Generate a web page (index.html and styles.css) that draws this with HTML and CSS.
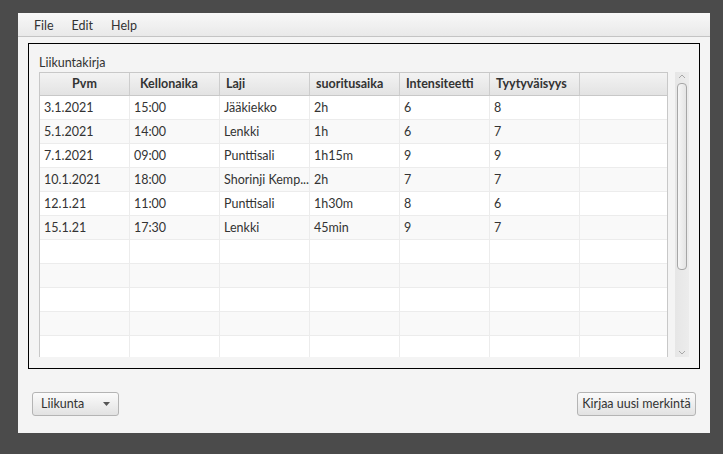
FILE: index.html
```html
<!DOCTYPE html>
<html>
<head>
<meta charset="utf-8">
<link rel="stylesheet" href="styles.css">
</head>
<body>
<div class="window">
  <div class="menubar">
    <span class="menu">File</span>
    <span class="menu">Edit</span>
    <span class="menu">Help</span>
  </div>
  <div class="main">
    <div class="panel">
      <div class="title">Liikuntakirja</div>
      <div class="tablewrap">
        <div class="table">
          <div class="row head">
            <div class="cell center">Pvm</div>
            <div class="cell kello">Kellonaika</div>
            <div class="cell">Laji</div>
            <div class="cell">suoritusaika</div>
            <div class="cell">Intensiteetti</div>
            <div class="cell">Tyytyväisyys</div>
            <div class="cell last"></div>
          </div>
          <div class="body">
            <div class="row"><div class="cell">3.1.2021</div><div class="cell">15:00</div><div class="cell">Jääkiekko</div><div class="cell">2h</div><div class="cell">6</div><div class="cell">8</div><div class="cell last"></div></div>
            <div class="row"><div class="cell">5.1.2021</div><div class="cell">14:00</div><div class="cell">Lenkki</div><div class="cell">1h</div><div class="cell">6</div><div class="cell">7</div><div class="cell last"></div></div>
            <div class="row"><div class="cell">7.1.2021</div><div class="cell">09:00</div><div class="cell">Punttisali</div><div class="cell">1h15m</div><div class="cell">9</div><div class="cell">9</div><div class="cell last"></div></div>
            <div class="row"><div class="cell">10.1.2021</div><div class="cell">18:00</div><div class="cell">Shorinji Kemp...</div><div class="cell">2h</div><div class="cell">7</div><div class="cell">7</div><div class="cell last"></div></div>
            <div class="row"><div class="cell">12.1.21</div><div class="cell">11:00</div><div class="cell">Punttisali</div><div class="cell">1h30m</div><div class="cell">8</div><div class="cell">6</div><div class="cell last"></div></div>
            <div class="row"><div class="cell">15.1.21</div><div class="cell">17:30</div><div class="cell">Lenkki</div><div class="cell">45min</div><div class="cell">9</div><div class="cell">7</div><div class="cell last"></div></div>
            <div class="row"><div class="cell"></div><div class="cell"></div><div class="cell"></div><div class="cell"></div><div class="cell"></div><div class="cell"></div><div class="cell last"></div></div>
            <div class="row"><div class="cell"></div><div class="cell"></div><div class="cell"></div><div class="cell"></div><div class="cell"></div><div class="cell"></div><div class="cell last"></div></div>
            <div class="row"><div class="cell"></div><div class="cell"></div><div class="cell"></div><div class="cell"></div><div class="cell"></div><div class="cell"></div><div class="cell last"></div></div>
            <div class="row"><div class="cell"></div><div class="cell"></div><div class="cell"></div><div class="cell"></div><div class="cell"></div><div class="cell"></div><div class="cell last"></div></div>
            <div class="row"><div class="cell"></div><div class="cell"></div><div class="cell"></div><div class="cell"></div><div class="cell"></div><div class="cell"></div><div class="cell last"></div></div>
          </div>
        </div>
        <div class="scrollbar">
          <svg class="arrow" width="14" height="10" viewBox="0 0 14 10"><path d="M4 6 L7 3 L10 6" fill="none" stroke="#a8a8a8" stroke-width="1"/></svg>
          <div class="thumb"></div>
          <div class="spacer"></div>
          <svg class="arrow" width="14" height="10" viewBox="0 0 14 10"><path d="M4 4 L7 7 L10 4" fill="none" stroke="#a8a8a8" stroke-width="1"/></svg>
        </div>
      </div>
    </div>
    <div class="bottom">
      <div class="combo"><span>Liikunta</span><svg width="7" height="4" viewBox="0 0 7 4"><path d="M0 0 H7 L3.5 4 Z" fill="#555"/></svg></div>
      <div class="button">Kirjaa uusi merkintä</div>
    </div>
  </div>
</div>
</body>
</html>
```
FILE: styles.css
```css
html, body {
  margin: 0;
  padding: 0;
}
body {
  background: #4b4b4b;
  width: 723px;
  height: 454px;
  overflow: hidden;
  font-family: "Lato", "Noto Sans", sans-serif;
  font-size: 12.5px;
  color: #333;
}
.window {
  margin-left: 18px;
  margin-top: 13px;
  width: 692px;
  height: 420px;
  background: #f4f4f4;
  display: flex;
  flex-direction: column;
}
.menubar {
  height: 24px;
  box-sizing: border-box;
  border-bottom: 1px solid #c4c4c4;
  background: linear-gradient(#f8f8f8, #e9e9e9);
  display: flex;
  align-items: center;
  padding-left: 16px;
  padding-top: 2px;
  gap: 18px;
  flex: none;
}
.menu {
  line-height: 16px;
  color: #333;
}
.main {
  flex: 1;
  display: flex;
  flex-direction: column;
  padding: 6px 10px 0 10px;
}
.panel {
  border: 1px solid #000;
  height: 326px;
  box-sizing: border-box;
  padding: 11px 10px 10px 10px;
  display: flex;
  flex-direction: column;
}
.title {
  line-height: 16px;
  height: 17px;
}
.tablewrap {
  flex: 1;
  display: flex;
  gap: 7px;
  min-height: 0;
}
.table {
  width: 630px;
  height: 285px;
  box-sizing: border-box;
  border-left: 1px solid #c8c8c8;
  border-right: 1px solid #c8c8c8;
  overflow: hidden;
  background: #f4f4f4;
}
.row {
  display: flex;
  height: 24px;
  box-sizing: border-box;
}
.cell {
  width: 90px;
  flex: none;
  box-sizing: border-box;
  border-right: 1px solid #ececec;
  padding-left: 4px;
  line-height: 23px;
  white-space: nowrap;
  overflow: hidden;
}
.cell.last {
  width: 88px;
  border-right: none;
}
.head {
  border-top: 1px solid #c8c8c8;
  border-bottom: 1px solid #c8c8c8;
  background: linear-gradient(#f3f3f3, #e3e3e3);
  font-weight: bold;
}
.head .cell {
  border-right: 1px solid #cdcdcd;
  padding-left: 6px;
  line-height: 22px;
}
.head .cell.last {
  border-right: none;
}
.head .cell.center {
  text-align: center;
  padding-left: 0;
}
.head .cell.kello {
  padding-left: 10px;
}
.body {
  height: 261px;
  overflow: hidden;
}
.body .row {
  border-bottom: 1px solid #ececec;
  background: #fff;
}
.body .row:nth-child(even) {
  background: #f9f9f9;
}
.scrollbar {
  width: 14px;
  height: 285px;
  background: linear-gradient(to right, #e6e6e6, #ececec);
  display: flex;
  flex-direction: column;
  align-items: center;
}
.arrow {
  flex: none;
  display: block;
}
.thumb {
  width: 10px;
  height: 187px;
  box-sizing: border-box;
  border: 1px solid #a6a6a6;
  border-radius: 4px;
  background: linear-gradient(to right, #f6f6f6, #e4e4e4);
  margin-top: 1px;
  flex: none;
}
.spacer {
  flex: 1;
}
.bottom {
  display: flex;
  justify-content: space-between;
  padding: 23px 4px 0 4px;
}
.combo, .button {
  height: 24px;
  box-sizing: border-box;
  border: 1px solid #b4b4b4;
  border-radius: 3px;
  background: linear-gradient(#fbfbfb, #e2e2e2);
  display: flex;
  align-items: center;
  line-height: 16px;
}
.combo {
  width: 87px;
  padding: 0 8px 0 8px;
  justify-content: space-between;
}
.combo svg {
  display: block;
}
.button {
  width: 119px;
  justify-content: center;
}
```
